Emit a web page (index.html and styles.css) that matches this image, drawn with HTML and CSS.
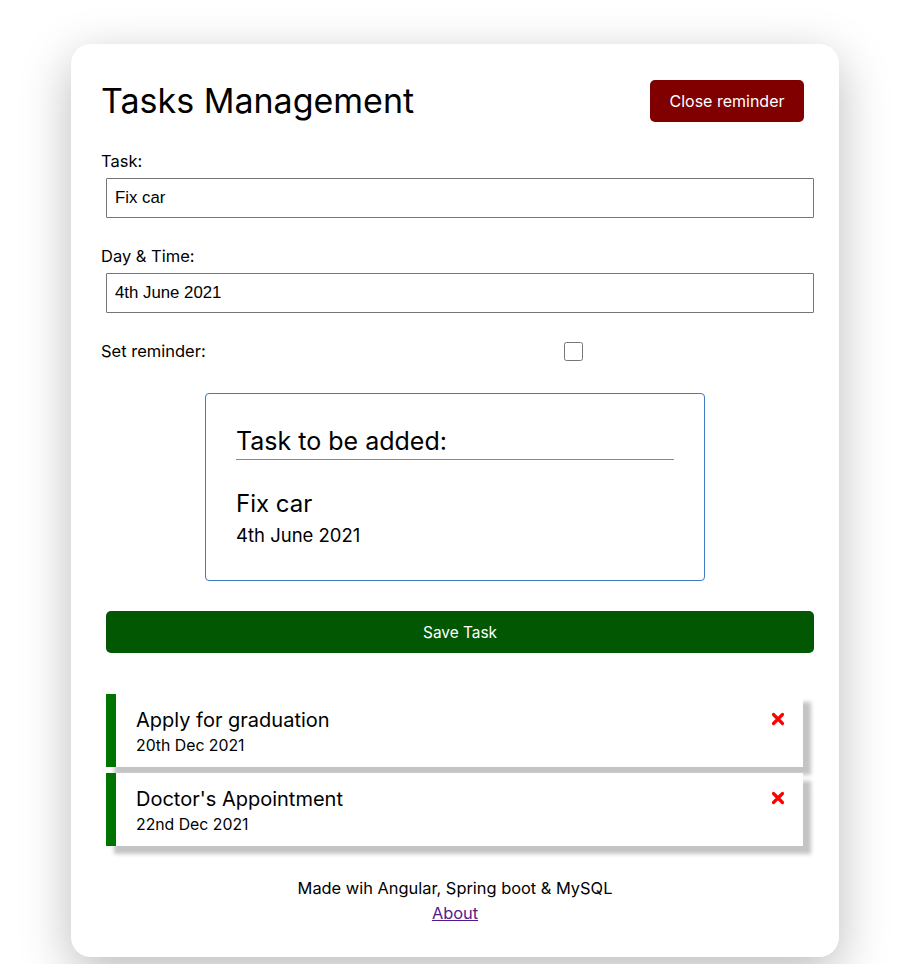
FILE: index.html
```html
<!DOCTYPE html>
<html lang="en">
<head>
<meta charset="utf-8">
<title>Tasks Management</title>
<link rel="stylesheet" href="styles.css">
</head>
<body>
<div class="page">
  <div class="container">
    <header class="header">
      <h2 class="title">Tasks Management</h2>
      <button class="btn btn-close" type="button">Close reminder</button>
    </header>

    <form class="add-form">
      <div class="form-control">
        <label class="label">Task:</label>
        <input class="text-input" type="text" value="Fix car">
      </div>
      <div class="form-control">
        <label class="label">Day &amp; Time:</label>
        <input class="text-input" type="text" value="4th June 2021">
      </div>
      <div class="form-control-check">
        <label class="label">Set reminder:</label>
        <input class="check" type="checkbox">
      </div>

      <div class="preview">
        <h3 class="preview-title">Task to be added:</h3>
        <div class="preview-task">Fix car</div>
        <div class="preview-day">4th June 2021</div>
      </div>

      <button class="btn btn-save" type="button">Save Task</button>
    </form>

    <div class="tasks">
      <div class="task">
        <div class="task-body">
          <div class="task-text">Apply for graduation</div>
          <div class="task-day">20th Dec 2021</div>
        </div>
        <svg class="task-del" width="14" height="14" viewBox="0 0 14 14" aria-hidden="true">
          <path d="M2.5 2.5 L11.5 11.5 M11.5 2.5 L2.5 11.5" stroke="#ff0000" stroke-width="3.2" stroke-linecap="round" fill="none"/>
        </svg>
      </div>
      <div class="task">
        <div class="task-body">
          <div class="task-text">Doctor's Appointment</div>
          <div class="task-day">22nd Dec 2021</div>
        </div>
        <svg class="task-del" width="14" height="14" viewBox="0 0 14 14" aria-hidden="true">
          <path d="M2.5 2.5 L11.5 11.5 M11.5 2.5 L2.5 11.5" stroke="#ff0000" stroke-width="3.2" stroke-linecap="round" fill="none"/>
        </svg>
      </div>
    </div>

    <footer class="footer">
      <p class="footer-text">Made wih Angular, Spring boot &amp; MySQL</p>
      <a class="footer-link" href="#about">About</a>
    </footer>
  </div>
</div>
</body>
</html>
```

FILE: styles.css
```css
* {
  box-sizing: border-box;
}

body {
  margin: 0;
  background: #ffffff;
  font-family: Inter, "Open Sans", sans-serif;
  color: #000;
}

.page {
  padding: 44px 0 40px 4px;
}

.container {
  width: 768px;
  margin: 0 auto;
  background: #fff;
  border-radius: 20px;
  padding: 31px 30px 31px;
  box-shadow: 0 15px 50px rgba(0, 0, 0, 0.27);
}

.header {
  display: flex;
  justify-content: space-between;
  align-items: center;
  margin-bottom: 22px;
}

.title {
  margin: 0;
  font-size: 34px;
  font-weight: 400;
  line-height: 40px;
}

.btn {
  border: none;
  border-radius: 5px;
  color: #fff;
  font-family: inherit;
  cursor: pointer;
  margin: 5px;
  height: 42px;
}

.btn-close {
  background: #800000;
  width: 154px;
  font-size: 16px;
}

.btn-save {
  display: block;
  width: 708px;
  background: #025802;
  margin: 30px 0 0 5px;
  font-size: 15.4px;
}

.form-control {
  margin-bottom: 26px;
}

.label {
  display: block;
  font-size: 16.5px;
  line-height: 24px;
}

.text-input {
  display: block;
  width: 708px;
  height: 40px;
  margin: 5px 0 0 5px;
  padding: 0 8px;
  border: 1px solid #767676;
  border-radius: 1px;
  font-family: "Liberation Sans", Arial, sans-serif;
  font-size: 16.8px;
  color: #000;
}

.form-control-check {
  display: grid;
  grid-template-columns: 1fr 2fr;
  align-items: center;
  height: 22px;
}

.check {
  justify-self: center;
  width: 19px;
  height: 19px;
  margin: 0;
}

.preview {
  width: 500px;
  margin: 32px auto 0;
  border: 1px solid #3d7cc0;
  border-radius: 4px;
  padding: 32px 30px 33px;
}

.preview-title {
  margin: 0 0 29px;
  font-size: 25px;
  font-weight: 400;
  line-height: 30px;
  padding-bottom: 3px;
  border-bottom: 1px solid #8a8a8a;
}

.preview-task {
  font-size: 24px;
  line-height: 30px;
}

.preview-day {
  font-size: 18.5px;
  line-height: 24px;
  margin-top: 4px;
}

.tasks {
  margin-top: 41px;
  display: flex;
  flex-direction: column;
  gap: 6px;
}

.task {
  display: flex;
  justify-content: space-between;
  align-items: flex-start;
  width: 697px;
  height: 73px;
  margin-left: 5px;
  background: #fff;
  border-left: 10px solid #007400;
  padding: 14px 18px 0 20px;
  box-shadow: 8px 8px 4px #c4c4c4;
}

.task-text {
  font-size: 20px;
  line-height: 24px;
}

.task-day {
  font-size: 15.8px;
  line-height: 22px;
  margin-top: 3px;
}

.task-del {
  margin-top: 4px;
}

.footer {
  margin-top: 30px;
  text-align: center;
}

.footer-text {
  margin: 0;
  font-size: 16.4px;
  line-height: 25px;
}

.footer-link {
  font-size: 16.4px;
  line-height: 25px;
  color: #551a8b;
}
```
